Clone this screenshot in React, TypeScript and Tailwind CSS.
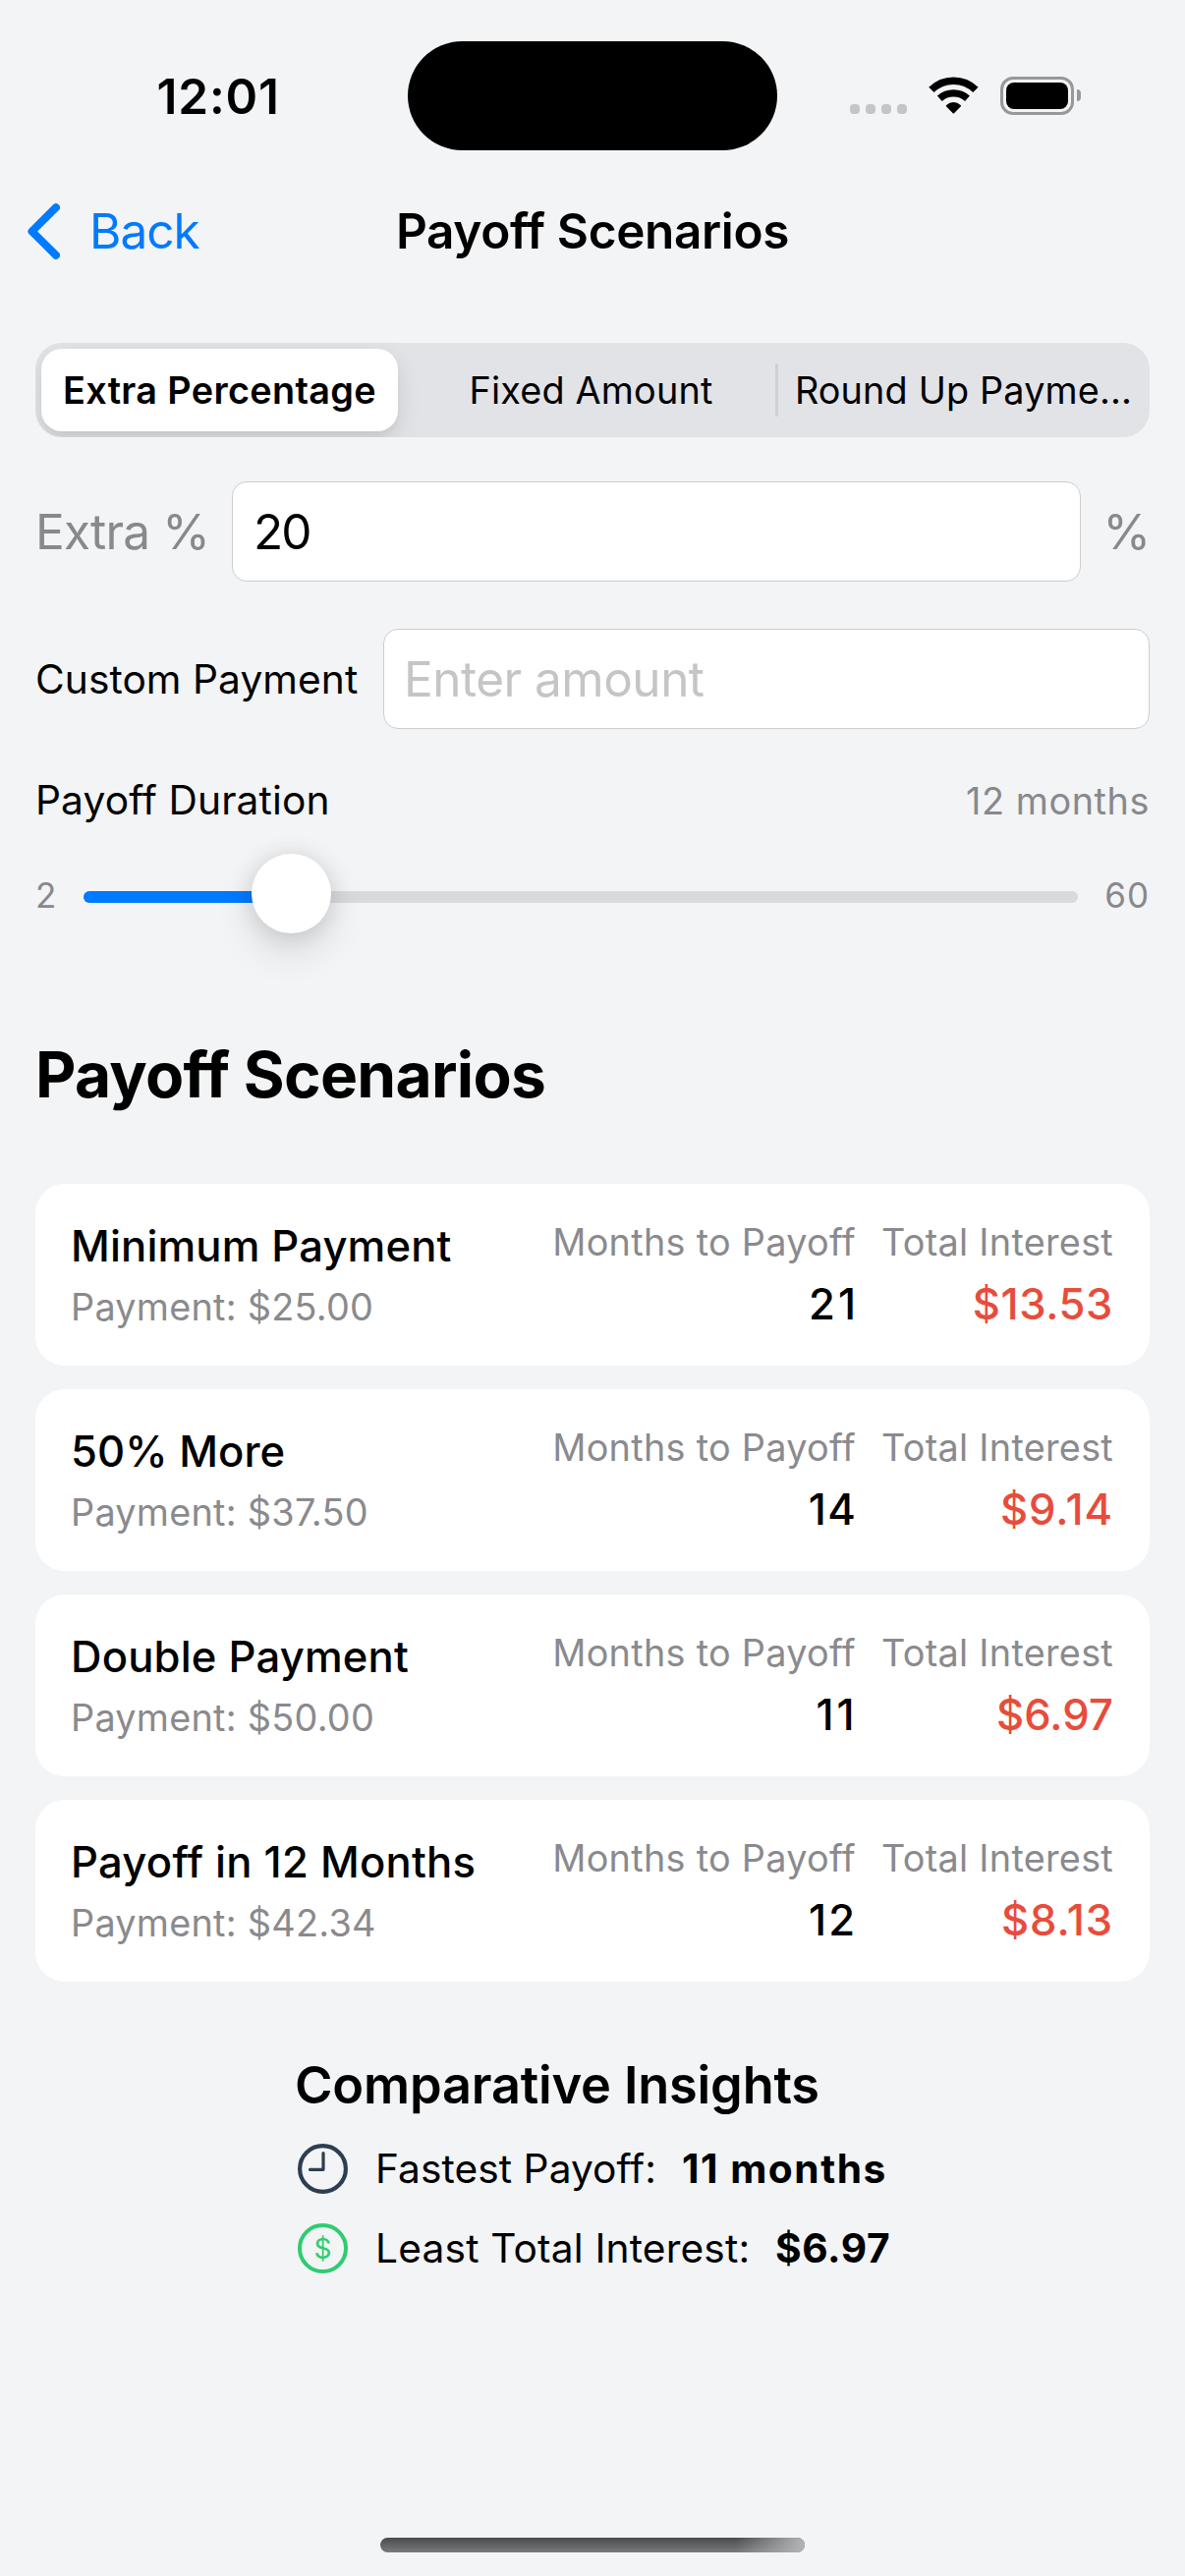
import type { ReactNode } from "react";

type Scenario = {
  name: string;
  nameClass: string;
  payment: string;
  months: string;
  monthsClass: string;
  interest: string;
  interestClass: string;
};

const scenarios: Scenario[] = [
  {
    name: "Minimum Payment",
    nameClass: "tracking-[0.13px]",
    payment: "$25.00",
    months: "21",
    monthsClass: "tracking-[3px] -mr-[3px]",
    interest: "$13.53",
    interestClass: "tracking-[0.6px]",
  },
  {
    name: "50% More",
    nameClass: "tracking-[0.05px]",
    payment: "$37.50",
    months: "14",
    monthsClass: "tracking-[1.3px] -mr-[1px]",
    interest: "$9.14",
    interestClass: "tracking-[0.9px]",
  },
  {
    name: "Double Payment",
    nameClass: "tracking-[0.18px]",
    payment: "$50.00",
    months: "11",
    monthsClass: "tracking-[3px] -mr-[1.5px]",
    interest: "$6.97",
    interestClass: "tracking-[0.1px]",
  },
  {
    name: "Payoff in 12 Months",
    nameClass: "tracking-[0.24px]",
    payment: "$42.34",
    months: "12",
    monthsClass: "tracking-[2px] -mr-[1px]",
    interest: "$8.13",
    interestClass: "tracking-[0.9px]",
  },
];

function StatusBar() {
  return (
    <div className="flex h-[194px] items-center">
      <div className="w-[415px] pt-[4px] pl-[159.5px] text-[49.5px] leading-none font-semibold tracking-[0.82px]">
        12:01
      </div>
      <div className="h-[111px] w-[376px] rounded-[56px] bg-black" />
      <div className="ml-[74px] flex h-[38px] items-end gap-[6px]">
        {[0, 1, 2, 3].map((i) => (
          <span key={i} className="size-[10px] rounded-[4px] bg-[#c4c5c7]" />
        ))}
      </div>
      <svg className="ml-[22px] h-[38px] w-[51px]" viewBox="0 0 51 38" fill="none">
        <path d="M2.9 13.4A32.1 32.1 0 0 1 47.9 13.4" stroke="#000" strokeWidth="7.6" />
        <path d="M11.3 22.3A21.1 21.1 0 0 1 39.5 22.3" stroke="#000" strokeWidth="7.2" />
        <path d="M17.9 30.3Q17.5 29.6 18.2 29A10.2 10.2 0 0 1 32.6 29Q33.3 29.6 32.9 30.3L26 37.2Q25.4 37.6 24.8 37.2Z" fill="#000" />
      </svg>
      <div className="ml-[22px] flex items-center gap-[3px]">
        <div className="h-[39px] w-[75px] rounded-[13px] border-[3px] border-[#97989b] p-[3px]">
          <div className="h-full rounded-[8px] bg-black" />
        </div>
        <div className="h-[12px] w-[4px] rounded-r-full bg-[#97989b]" />
      </div>
    </div>
  );
}

function NavBar() {
  return (
    <div className="relative flex h-[82px] items-center justify-center">
      <button className="absolute left-[28px] flex h-full items-center text-[49.5px] tracking-[-1px] text-[#007aff]">
        <svg className="mr-[30px] h-[57px] w-[33px]" viewBox="0 0 33 57" fill="none">
          <path d="M29 4.2L4.5 28.5L29 52.8" stroke="#007aff" strokeWidth="8" strokeLinecap="round" strokeLinejoin="round" />
        </svg>
        Back
      </button>
      <h1 className="pt-[2px] text-[49.5px] leading-none font-semibold tracking-[-0.36px]">Payoff Scenarios</h1>
    </div>
  );
}

function SegmentedControl() {
  return (
    <div className="mt-[73px] grid h-24 grid-cols-3 items-center overflow-hidden rounded-[27px] bg-[#e2e3e7] text-center text-[37.8px] leading-none">
      <div className="ml-[6px] flex h-[84px] w-[363px] items-center justify-center rounded-[21px] bg-white pt-[2px] font-semibold tracking-[0.34px] shadow-[0_9px_24px_rgba(0,0,0,0.11),0_6px_6px_rgba(0,0,0,0.03)]">
        Extra Percentage
      </div>
      <div className="relative pt-[2px] pr-[3px] tracking-[0.17px]">
        Fixed Amount
        <span className="absolute -top-[7px] right-0 h-[54px] w-[3px] rounded-full bg-[#cfd0d4]" />
      </div>
      <div className="pt-[2px] pr-[1px] tracking-[0.15px]">Round Up Payme...</div>
    </div>
  );
}

function DurationSlider() {
  return (
    <div className="mt-[30px] flex h-[82px] items-center text-[35px] leading-none text-[#88888d]">
      <span className="w-[49px]">2</span>
      <div className="relative mt-[4px] h-[12px] w-[1012px] rounded-full bg-[#d9dade]">
        <div className="h-full w-[212px] rounded-full bg-[#007aff]" />
        <div className="absolute top-[-38px] left-[171px] size-[81px] rounded-full bg-white shadow-[0_18px_39px_rgba(0,0,0,0.12),0_1px_24px_rgba(0,0,0,0.12)]" />
      </div>
      <span className="flex-1 text-right tracking-[1px]">60</span>
    </div>
  );
}

function ScenarioCard({ item }: { item: Scenario }) {
  return (
    <div className="flex h-[185px] justify-between rounded-[30px] bg-white pr-[37px] pl-[36px]">
      <div className="pt-[39px]">
        <div className={`text-[43.6px] leading-[50px] font-medium ${item.nameClass}`}>{item.name}</div>
        <div className="mt-[11px] text-[37.8px] leading-[50px] tracking-[0.26px] text-[#8a8a8e]">
          Payment: {item.payment}
        </div>
      </div>
      <div className="flex gap-[26px] pt-[34px] text-right">
        <div>
          <div className="text-[37.8px] leading-[50px] tracking-[0.29px] text-[#8a8a8e]">Months to Payoff</div>
          <div className={`mt-[14px] text-[43.6px] leading-[50px] font-medium ${item.monthsClass}`}>{item.months}</div>
        </div>
        <div>
          <div className="text-[37.8px] leading-[50px] tracking-[0.27px] text-[#8a8a8e]">Total Interest</div>
          <div className={`mt-[14px] text-[43.6px] leading-[50px] font-medium text-[#e74c3c] ${item.interestClass}`}>
            {item.interest}
          </div>
        </div>
      </div>
    </div>
  );
}

function InsightRow({ icon, children }: { icon: ReactNode; children: ReactNode }) {
  return (
    <div className="flex h-[51px] items-center pl-[3px] text-[40.7px] leading-[53px]">
      {icon}
      {children}
    </div>
  );
}

export default function App() {
  return (
    <div className="h-[2622px] w-[1206px] overflow-hidden bg-[#f3f4f6] font-['Inter',sans-serif] text-black">
      <StatusBar />
      <NavBar />
      <main className="px-9">
        <SegmentedControl />

        <div className="mt-[45px] flex h-[102px] items-center text-[49.5px] leading-none">
          <label className="w-[200px] pt-[2px] tracking-[-0.85px] whitespace-nowrap text-[#88888d]">Extra %</label>
          <input
            className="h-full min-w-0 flex-1 rounded-[15px] border border-[#cdcdcf] bg-white pl-[21px] tracking-[-2px] outline-none"
            defaultValue="20"
          />
          <span className="w-[70px] pt-[2px] pl-[22.5px] text-[#88888d]">%</span>
        </div>

        <div className="mt-[48px] flex h-[102px] items-center leading-none">
          <label className="w-[354px] pt-[2px] text-[40.7px] tracking-[0.06px]">Custom Payment</label>
          <input
            className="h-full min-w-0 flex-1 rounded-[15px] border border-[#cdcdcf] bg-white pl-[20px] text-[49.5px] tracking-[-0.51px] outline-none placeholder:text-[#c5c5c7]"
            placeholder="Enter amount"
          />
        </div>

        <div className="mt-[48px] flex h-[50px] items-center justify-between leading-none">
          <span className="pt-px text-[40.7px] tracking-[0.12px]">Payoff Duration</span>
          <span className="pt-[2px] text-[37.8px] tracking-[0.58px] text-[#88888d]">12 months</span>
        </div>
        <DurationSlider />

        <h2 className="mt-[102px] text-[64px] leading-[80px] font-bold tracking-[-0.71px]">Payoff Scenarios</h2>

        <div className="mt-[71px] flex flex-col gap-6">
          {scenarios.map((item) => (
            <ScenarioCard key={item.name} item={item} />
          ))}
        </div>

        <section className="mt-[73px] ml-[264px]">
          <h3 className="text-[52.3px] leading-[64px] font-semibold tracking-[-0.17px]">Comparative Insights</h3>
          <div className="mt-[28px] flex flex-col gap-[30px]">
            <InsightRow
              icon={
                <svg className="mr-[28px] size-[51px]" viewBox="0 0 51 51" fill="none" stroke="#2c3e50">
                  <circle cx="25.5" cy="25.5" r="23.4" strokeWidth="4.2" />
                  <path d="M26 9.5V26.3H12.5" strokeWidth="3.2" strokeLinecap="round" strokeLinejoin="round" />
                </svg>
              }
            >
              <span className="w-[312px] tracking-[0.05px]">Fastest Payoff:</span>
              <span className="font-bold tracking-[1.5px]">11 months</span>
            </InsightRow>
            <InsightRow
              icon={
                <span className="mr-[28px] flex size-[51px] items-center justify-center rounded-full border-[4px] border-[#2ecc71] text-[28px] leading-none text-[#2ecc71]">
                  $
                </span>
              }
            >
              <span className="w-[407px] tracking-[0.17px]">Least Total Interest:</span>
              <span className="font-bold tracking-[0.6px]">$6.97</span>
            </InsightRow>
          </div>
        </section>
      </main>
      <div className="mx-auto mt-[269px] h-[15px] w-[432px] overflow-hidden rounded-full bg-linear-to-b from-[#4a4b4b] to-[#7a7b7d]">
        <div className="ml-auto h-full w-[70px] bg-linear-to-r from-transparent to-[#b4b5b7]" />
      </div>
    </div>
  );
}
